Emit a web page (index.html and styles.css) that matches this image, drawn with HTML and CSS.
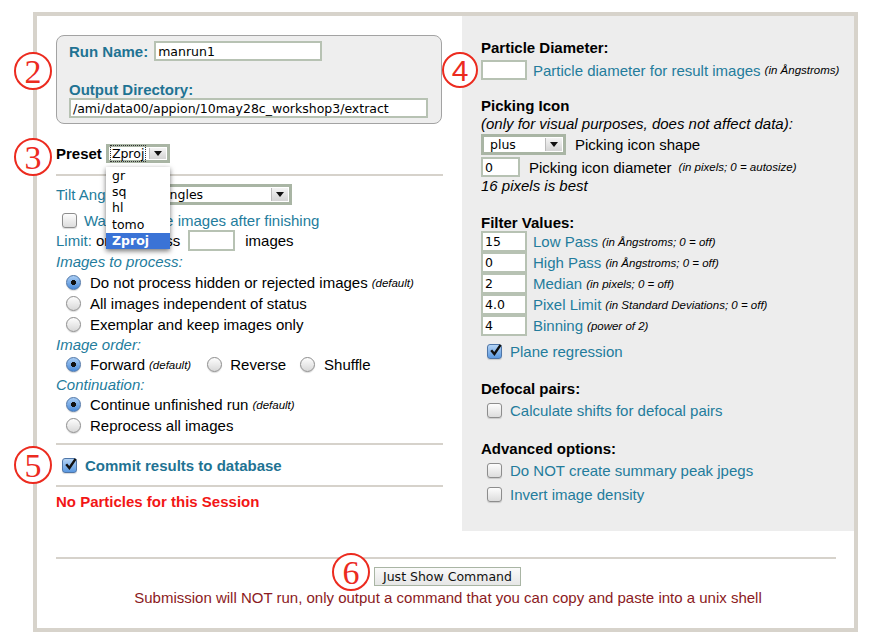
FILE: index.html
```html
<!DOCTYPE html>
<html>
<head>
<meta charset="utf-8">
<title>Particle picking</title>
<link rel="stylesheet" href="styles.css">
</head>
<body>
<div class="frame">
  <div class="cols">
    <div class="left">
      <div class="runbox">
        <div class="row runrow"><span class="lbl">Run Name:</span><span class="tin w168">manrun1</span></div>
        <div class="lbl outlbl">Output Directory:</div>
        <div class="tin w359">/ami/data00/appion/10may28c_workshop3/extract</div>
      </div>
      <div class="row presetrow"><span class="blk">Preset</span><span class="sel selpreset"><span class="selval"><span class="focus">Zproj</span></span><span class="arrow"><span class="tri"></span></span></span></div>
      <div class="hr hr1"></div>
      <div class="row tiltrow"><span class="teal">Tilt Angle:</span><span class="sel seltilt"><span class="selval">all angles</span><span class="arrow"><span class="tri"></span></span></span></div>
      <div class="row line20 waitrow"><span class="cb"></span><span class="teal">Wait for more images after finishing</span></div>
      <div class="row line21"><span class="teal">Limit:</span>&nbsp;only process<span class="tin w47 limitin"></span><span class="imgs">images</span></div>
      <div class="sub">Images to process:</div>
      <div class="row line21"><span class="rb on"></span>Do not process hidden or rejected images <span class="note">(default)</span></div>
      <div class="row line21"><span class="rb"></span>All images independent of status</div>
      <div class="row line21"><span class="rb"></span>Exemplar and keep images only</div>
      <div class="sub s19">Image order:</div>
      <div class="row line21"><span class="rb on"></span>Forward <span class="note">(default)</span><span class="rb gap"></span>Reverse<span class="rb gap2"></span>Shuffle</div>
      <div class="sub s19">Continuation:</div>
      <div class="row line21"><span class="rb on"></span>Continue unfinished run <span class="note">(default)</span></div>
      <div class="row line21"><span class="rb"></span>Reprocess all images</div>
      <div class="hr hr2"></div>
      <div class="row line20 commitrow"><span class="cb on"><svg viewBox="0 0 15 15" width="15" height="15"><path d="M3.2 7.2 L6.4 11 L12.6 1.8" fill="none" stroke="#111" stroke-width="2.4"/></svg></span><span class="lbl">Commit results to database</span></div>
      <div class="hr hr3"></div>
      <div class="nopart">No Particles for this Session</div>
    </div>
    <div class="right">
      <div class="head">Particle Diameter:</div>
      <div class="row frow pd"><span class="tin w46"></span><span class="teal">Particle diameter for result images</span> <span class="note">(in Ångstroms)</span></div>
      <div class="head pick">Picking Icon</div>
      <div class="ital">(only for visual purposes, does not affect data):</div>
      <div class="row frow plusrow"><span class="sel selplus"><span class="selval">plus</span><span class="arrow"><span class="tri"></span></span></span><span>Picking icon shape</span></div>
      <div class="row frow zerorow"><span class="tin w39">0</span><span>Picking icon diameter</span> <span class="note">(in pixels; 0 = autosize)</span></div>
      <div class="ital">16 pixels is best</div>
      <div class="head filt">Filter Values:</div>
      <div class="row frow fr"><span class="tin w46 h21">15</span><span class="teal">Low Pass</span> <span class="note">(in Ångstroms; 0 = off)</span></div>
      <div class="row frow fr"><span class="tin w46 h21">0</span><span class="teal">High Pass</span> <span class="note">(in Ångstroms; 0 = off)</span></div>
      <div class="row frow fr"><span class="tin w46 h21">2</span><span class="teal">Median</span> <span class="note">(in pixels; 0 = off)</span></div>
      <div class="row frow fr"><span class="tin w46 h21">4.0</span><span class="teal">Pixel Limit</span> <span class="note">(in Standard Deviations; 0 = off)</span></div>
      <div class="row frow fr"><span class="tin w46 h21">4</span><span class="teal">Binning</span> <span class="note">(power of 2)</span></div>
      <div class="row line20 rcb plane"><span class="cb on"><svg viewBox="0 0 15 15" width="15" height="15"><path d="M3.2 7.2 L6.4 11 L12.6 1.8" fill="none" stroke="#111" stroke-width="2.4"/></svg></span><span class="teal">Plane regression</span></div>
      <div class="head defo">Defocal pairs:</div>
      <div class="row line20 rcb c1"><span class="cb"></span><span class="teal">Calculate shifts for defocal pairs</span></div>
      <div class="head adv">Advanced options:</div>
      <div class="row line20 rcb c1"><span class="cb"></span><span class="teal">Do NOT create summary peak jpegs</span></div>
      <div class="row line20 rcb c2"><span class="cb"></span><span class="teal">Invert image density</span></div>
    </div>
  </div>
  <div class="bottom">
    <div class="hr"></div>
    <div class="btnrow"><span class="btn">Just Show Command</span></div>
    <div class="subm">Submission will NOT run, only output a command that you can copy and paste into a unix shell</div>
  </div>
</div>

<div class="dropdown">
  <div class="opt">gr</div>
  <div class="opt">sq</div>
  <div class="opt">hl</div>
  <div class="opt">tomo</div>
  <div class="opt sel-opt">Zproj</div>
</div>

<div class="mark m2">2</div>
<div class="mark m3">3</div>
<div class="mark m4">4</div>
<div class="mark m5">5</div>
<div class="mark m6">6</div>
</body>
</html>
```

FILE: styles.css
```css
body {
  margin: 0;
  font-family: "Liberation Sans", Arial, sans-serif;
  font-size: 15px;
  color: #000;
  background: #fff;
}

.frame {
  margin: 12px 0 0 33px;
  width: 825px;
  height: 620px;
  border: 4px solid #d7d3cb;
  box-sizing: border-box;
}

.cols { display: flex; }

.left {
  width: 425px;
  box-sizing: border-box;
  padding: 19px 19px 0 19px;
}

.right {
  width: 392px;
  box-sizing: border-box;
  background: #ededed;
  padding: 23px 0 27px 19px;
}

.row { display: flex; align-items: center; white-space: nowrap; }

.teal { color: #237c9c; }
.lbl { color: #1f7393; font-weight: bold; }
.blk { font-weight: bold; }

.runbox {
  width: 386px;
  height: 89px;
  box-sizing: border-box;
  border: 1px solid #a3a3a3;
  border-radius: 8px;
  background: #eeeeee;
  padding: 5px 12px;
}
.runrow { height: 20px; gap: 6px; }
.outlbl { margin-top: 21px; height: 16px; line-height: 16px; }

.tin {
  display: inline-flex;
  align-items: center;
  box-sizing: border-box;
  height: 20px;
  background: #fff;
  border: 2px solid #b7c2b3;
  font-family: "DejaVu Sans", sans-serif;
  font-size: 12.5px;
  padding-left: 2px;
  color: #000;
}
.w168 { width: 168px; }
.w359 { width: 359px; }
.w47 { width: 47px; height: 21px; }
.w46 { width: 46px; }
.w39 { width: 39px; }
.h21 { height: 21px; }

.sel {
  display: inline-flex;
  box-sizing: border-box;
  border: 3px solid #a9b5a4;
  background: #fff;
  font-family: "DejaVu Sans", sans-serif;
  font-size: 12.5px;
}
.selval {
  flex: 1;
  display: flex;
  align-items: center;
  padding-left: 4px;
}
.arrow {
  width: 16px;
  display: flex;
  align-items: center;
  justify-content: center;
  background: linear-gradient(#f4f4f4, #d4d4d4);
  border-left: 1px solid #bbb;
  margin: 1px 1px 1px 0;
}
.tri {
  width: 0;
  height: 0;
  border-left: 4px solid transparent;
  border-right: 4px solid transparent;
  border-top: 5px solid #111;
}
.focus { outline: 1px dotted #333; padding: 0 1px; }

.presetrow { margin-top: 20px; height: 19px; gap: 4px; }
.selpreset { width: 64px; height: 19px; }
.selpreset .selval { padding-left: 2px; }

.hr { height: 2px; background: #d6d2cb; }
.hr1 { margin-top: 11px; }
.hr2 { margin-top: 7px; }
.hr3 { margin-top: 10px; }

.tiltrow { margin-top: 8px; height: 21px; gap: 13px; }
.seltilt { width: 158px; height: 21px; }
.seltilt .selval { padding-left: 6px; }

.line20 { height: 20px; }
.line21 { height: 21px; }
.waitrow { margin-top: 5px; }

.limitin { margin-left: 8px; }
.imgs { margin-left: 10px; }

.sub {
  font-style: italic;
  color: #237c9c;
  height: 21px;
  line-height: 21px;
}
.s19 { height: 19px; line-height: 19px; }

.cb {
  display: inline-block;
  width: 15px;
  height: 15px;
  box-sizing: border-box;
  border: 1px solid #8d8d8d;
  border-radius: 3px;
  background: linear-gradient(#fdfdfd, #dcdcdc);
  box-shadow: 0 1px 1px rgba(0,0,0,0.15);
  margin: 0 7px 0 6px;
  position: relative;
  flex: none;
}
.cb.on {
  background: linear-gradient(#b5d4f5, #5a98e0);
  border-color: #4f76a8;
}
.cb svg { position: absolute; left: 0; top: -2px; }

.rb {
  display: inline-block;
  width: 15px;
  height: 15px;
  box-sizing: border-box;
  border: 1px solid #8d8d8d;
  border-radius: 50%;
  background: linear-gradient(#fdfdfd, #d8d8d8);
  box-shadow: 0 1px 1px rgba(0,0,0,0.15);
  margin: 0 9px 0 10px;
  position: relative;
  flex: none;
}
.rb.on {
  background: radial-gradient(circle at 50% 50%, #111 0, #111 2.3px, transparent 2.8px), linear-gradient(#a9cdf4, #4a8ad8);
  border-color: #4f76a8;
}
.rb.gap { margin-left: 16px; margin-right: 8px; }
.rb.gap2 { margin-left: 14px; margin-right: 9px; }

.note {
  font-style: italic;
  font-size: 11.5px;
  margin-left: 4px;
}

.commitrow { margin-top: 10px; }
.commitrow .cb { margin-right: 8px; }

.nopart {
  margin-top: 6px;
  height: 18px;
  line-height: 18px;
  color: #f21616;
  font-weight: bold;
}

/* right column */
.head { font-weight: bold; height: 18px; line-height: 18px; }
.pick { margin-top: 17px; }
.filt { margin-top: 19px; height: 17px; line-height: 17px; }
.defo { margin-top: 19px; }
.adv { margin-top: 20px; }

.ital { font-style: italic; height: 18px; line-height: 18px; }

.frow { gap: 6px; }
.frow .note { margin-left: -2px; }
.pd { margin-top: 3px; height: 20px; }
.plusrow { margin-top: 1px; height: 21px; gap: 9px; }
.selplus { width: 85px; height: 21px; }
.selplus .selval { padding-left: 6px; }
.zerorow { margin-top: 2px; height: 20px; gap: 9px; }
.zerorow .tin { height: 20px; }
.fr { height: 21px; }

.rcb .cb { margin-right: 8px; }
.plane { margin-top: 5px; }
.c1 { margin-top: 2px; }
.c2 { margin-top: 4px; }

/* bottom */
.bottom { padding: 26px 18px 0 19px; }
.btnrow {
  display: flex;
  justify-content: center;
  margin-top: 8px;
  padding-left: 3px;
}
.btn {
  box-sizing: border-box;
  width: 147px;
  height: 19px;
  border: 1px solid #a9b5a4;
  background: linear-gradient(#fafafa, #e6e6e6);
  font-family: "DejaVu Sans", sans-serif;
  font-size: 12.5px;
  display: flex;
  align-items: center;
  justify-content: center;
  color: #111;
}
.subm {
  text-align: center;
  color: #8b1a22;
  height: 20px;
  line-height: 20px;
  margin-top: 2px;
  padding-left: 4px;
}

/* open preset dropdown */
.dropdown {
  position: absolute;
  left: 106px;
  top: 167px;
  width: 64px;
  height: 82px;
  box-sizing: border-box;
  background: #fff;
  box-shadow: 0 2px 5px rgba(0,0,0,0.55);
  padding-top: 1px;
  font-family: "DejaVu Sans", sans-serif;
  font-size: 12.5px;
}
.opt {
  height: 16.2px;
  line-height: 16.2px;
  padding-left: 6px;
}
.sel-opt {
  background: #3a73d6;
  color: #fff;
  font-weight: bold;
}

/* red annotation circles */
.mark {
  position: absolute;
  width: 38px;
  height: 38px;
  box-sizing: border-box;
  border: 2px solid #ec2b1f;
  border-radius: 50%;
  background: #fff;
  color: #ec2b1f;
  font-family: "Liberation Serif", "Times New Roman", serif;
  font-size: 34px;
  line-height: 35px;
  text-align: center;
}
.m2 { left: 14px; top: 52px; }
.m3 { left: 14px; top: 138px; }
.m4 { left: 442px; top: 52px; width: 36px; height: 36px; line-height: 33px; font-family: "Liberation Sans", Arial, sans-serif; font-size: 30px; font-weight: normal; }
.m5 { left: 14px; top: 446px; }
.m6 { left: 332px; top: 553px; }
```
